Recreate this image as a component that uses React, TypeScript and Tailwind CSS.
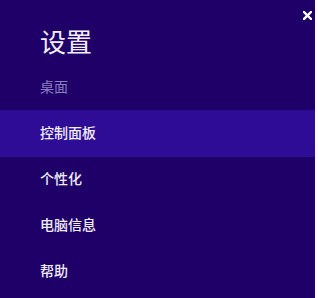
import React from "react";

const items = ["控制面板", "个性化", "电脑信息", "帮助"];

export default function App() {
  return (
    <div className="w-[318px] h-[298px] bg-white flex" style={{ fontFamily: '"Noto Sans CJK SC", "Noto Sans", sans-serif' }}>
      <div className="w-[315px] h-[298px] bg-[#1f0068] relative flex flex-col">
        <svg className="absolute left-[303px] top-[11px]" width="9" height="9" viewBox="0 0 9 9">
          <path d="M1 1 L8 8 M8 1 L1 8" stroke="#ffffff" strokeWidth="2.4" strokeLinecap="square" />
        </svg>
        <div className="pl-[40px] pt-[26px] h-[62px] text-[26px] leading-[30px] text-[#f2eefa]">设置</div>
        <div className="pl-[40px] h-[48px] flex items-center text-[14px] text-[#8a7fbf]">桌面</div>
        {items.map((t, i) => (
          <div
            key={t}
            className={
              i === 0
                ? "h-[47px] pl-[40px] pb-[3px] flex items-center text-[14px] font-medium text-[#f0ecf8] bg-[#2e0c96]"
                : "h-[46px] pl-[40px] pb-[3px] flex items-center text-[14px] font-medium text-[#f0ecf8]"
            }
          >
            {t}
          </div>
        ))}
      </div>
    </div>
  );
}
